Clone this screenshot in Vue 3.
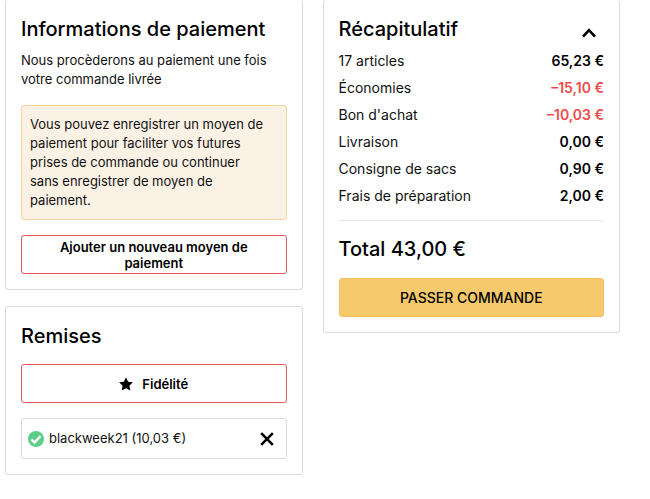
<script setup>
import { ref } from 'vue'

const open = ref(true)
const hasVoucher = ref(true)
const lines = [
  { label: '17 articles', amount: '65,23 €' },
  { label: 'Économies', amount: '–15,10 €', discount: true },
  { label: "Bon d'achat", amount: '–10,03 €', discount: true },
  { label: 'Livraison', amount: '0,00 €' },
  { label: 'Consigne de sacs', amount: '0,90 €' },
  { label: 'Frais de préparation', amount: '2,00 €' },
]
</script>

<template>
  <main class="checkout">
    <div class="column">
      <section class="card payment">
        <h2>Informations de paiement</h2>
        <p class="intro">Nous procèderons au paiement une fois votre commande livrée</p>
        <p class="notice">
          Vous pouvez enregistrer un moyen de paiement pour faciliter vos futures prises de
          commande ou continuer sans enregistrer de moyen de paiement.
        </p>
        <button type="button" class="btn outline">Ajouter un nouveau moyen de paiement</button>
      </section>

      <section class="card discounts">
        <h2>Remises</h2>
        <button type="button" class="btn outline">
          <svg class="star" viewBox="0 0 14 14" aria-hidden="true">
            <path d="M7 0.2 L9.1 4.7 L13.9 5.3 L10.4 8.7 L11.3 13.6 L7 11.3 L2.7 13.6 L3.6 8.7 L0.1 5.3 L4.9 4.7 Z" />
          </svg>
          Fidélité
        </button>
        <div v-if="hasVoucher" class="voucher">
          <svg class="check" viewBox="0 0 16 16" aria-hidden="true">
            <circle cx="8" cy="8" r="8" fill="#5bce8a" />
            <path d="M3.4 8.5 L6.6 11.5 L12.6 5" fill="none" stroke="#fff" stroke-width="2.4" />
          </svg>
          <span>blackweek21 (10,03 €)</span>
          <button type="button" class="icon-btn remove" aria-label="Retirer" @click="hasVoucher = false">
            <svg viewBox="0 0 14 14" aria-hidden="true">
              <path d="M1.2 1.2 L12.8 12.8 M12.8 1.2 L1.2 12.8" />
            </svg>
          </button>
        </div>
      </section>
    </div>

    <section class="card summary">
      <header>
        <h2>Récapitulatif</h2>
        <button type="button" class="icon-btn toggle" aria-label="Détails" :aria-expanded="open" @click="open = !open">
          <svg viewBox="0 0 14 10" aria-hidden="true">
            <path d="M1 8.6 L7 2.2 L13 8.6" />
          </svg>
        </button>
      </header>
      <dl v-if="open">
        <div v-for="line in lines" :key="line.label" class="line">
          <dt>{{ line.label }}</dt>
          <dd :class="{ discount: line.discount }">{{ line.amount }}</dd>
        </div>
      </dl>
      <p class="total">Total 43,00 €</p>
      <button type="button" class="btn primary">PASSER COMMANDE</button>
    </section>
  </main>
</template>

<style>
body {
  margin: 0;
  background: #fff;
}
</style>

<style scoped>
.checkout {
  display: grid;
  grid-template-columns: 1fr 1fr;
  align-items: start;
  gap: 20px;
  padding: 0 30px 16px 5px;
  font-family: Inter, "Liberation Sans", sans-serif;
  font-size: 13px;
  line-height: 19px;
  color: #111;
}
.column {
  display: grid;
  gap: 16px;
}
.card {
  display: flex;
  flex-direction: column;
  padding: 16px 15px 15px;
  border: 1px solid #dcdcdc;
  border-radius: 3px;
}
.payment,
.summary {
  border-top: 0;
}
h2,
p,
dl,
dd {
  margin: 0;
}
h2,
.total {
  font-size: 20px;
  font-weight: 500;
  line-height: 26px;
  color: #000;
}
.intro {
  margin-top: 9px;
}
.notice {
  margin-top: 16px;
  padding: 9px 18px 9px 8px;
  border: 1px solid #f7d3a3;
  border-radius: 3px;
  background: #fbf1e5;
}
.btn {
  display: flex;
  align-items: center;
  justify-content: center;
  min-height: 39px;
  padding: 2px 24px;
  border-radius: 3px;
  font: inherit;
  font-weight: 600;
  line-height: 16px;
  color: #000;
  cursor: pointer;
}
.outline {
  margin-top: 15px;
  border: 1px solid #e9575a;
  background: #fff;
}
.star {
  width: 14px;
  height: 14px;
  margin-right: 9px;
}
.voucher {
  display: flex;
  align-items: center;
  gap: 5px;
  min-height: 39px;
  margin-top: 15px;
  padding: 0 6px;
  border: 1px solid #dcdcdc;
  border-radius: 3px;
}
.check {
  width: 16px;
  height: 16px;
}
.icon-btn {
  display: flex;
  margin-left: auto;
  padding: 6px;
  border: 0;
  background: none;
  cursor: pointer;
}
.icon-btn svg {
  width: 14px;
  fill: none;
  stroke: #000;
  stroke-width: 2.6;
}
header {
  display: flex;
  align-items: end;
  height: 26px;
}
.toggle {
  padding: 0 8px 4px;
}
.toggle svg {
  height: 10px;
}
dl {
  display: grid;
  gap: 8px;
  margin-top: 9px;
  padding-bottom: 15px;
  border-bottom: 1px solid #e6e6e6;
  font-size: 14px;
}
.line {
  display: flex;
  justify-content: space-between;
}
dd {
  font-weight: 600;
  color: #000;
}
.discount {
  color: #ef4b4b;
}
.total {
  margin-top: 15px;
}
.primary {
  margin-top: 16px;
  border: 1px solid #f4bf60;
  background: #f6ca6c;
  font-size: 14px;
  font-weight: 500;
}
</style>
